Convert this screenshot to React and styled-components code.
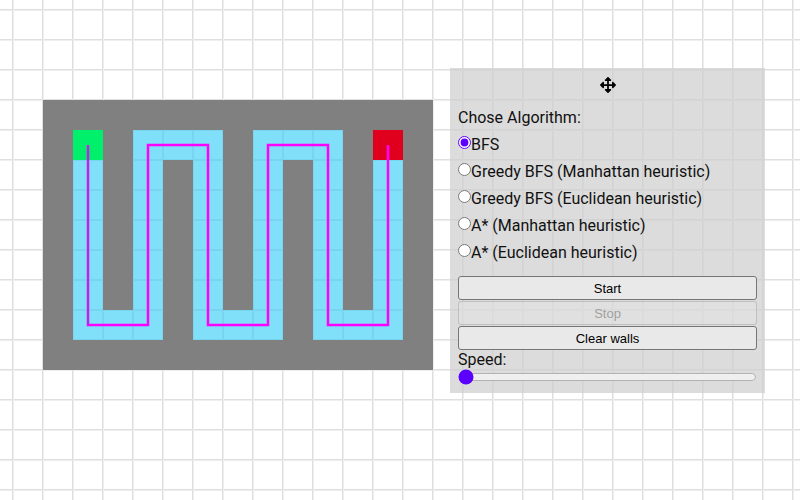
import React, { useState } from "react";
import styled, { createGlobalStyle } from "styled-components";
import { FaArrowsAlt } from "react-icons/fa";

const COLS = 13;
const ROWS = 9;
const CELL = 30;

const GlobalStyle = createGlobalStyle`
  html, body {
    margin: 0;
    padding: 0;
    background-color: #fff;
    background-image:
      linear-gradient(to right, #dfdfdf 1px, #eeeeee 1px, #eeeeee 2px, transparent 2px),
      linear-gradient(to bottom, #dfdfdf 1px, #eeeeee 1px, #eeeeee 2px, transparent 2px);
    background-size: 30px 30px;
    background-position: 12px 9px;
    font-family: Roboto, "Liberation Sans", sans-serif;
    min-height: 500px;
  }
`;

const Page = styled.div`
  display: flex;
  align-items: flex-start;
  gap: 17px;
  padding: 68px 0 0 43px;
`;

const Board = styled.div`
  position: relative;
  margin-top: 32px;
  display: grid;
  grid-template-columns: repeat(${COLS}, ${CELL}px);
  grid-template-rows: repeat(${ROWS}, ${CELL}px);
  background: #808080;
`;

const colors = {
  wall: "#808080",
  visited: "#80dff9",
  start: "#00f06c",
  end: "#e0001e",
};

const Cell = styled.div`
  box-sizing: border-box;
  background: ${(p) => colors[p.$kind]};
  border: ${(p) => (p.$kind === "visited" ? "1px solid rgba(90,170,200,0.2)" : "none")};
`;

const PathLayer = styled.svg`
  position: absolute;
  inset: 0;
  pointer-events: none;
`;

const Panel = styled.div`
  box-sizing: border-box;
  width: 315px;
  height: 325px;
  padding: 6px 8px 8px;
  background: rgba(205, 205, 205, 0.7);
  display: flex;
  flex-direction: column;
`;

const Handle = styled.div`
  display: flex;
  justify-content: center;
  height: 22px;
  align-items: center;
  font-size: 16px;
  color: #000;
`;

const Title = styled.div`
  margin-top: 13px;
  font-size: 16px;
  line-height: 20px;
  color: #111;
`;

const Options = styled.div`
  display: flex;
  flex-direction: column;
  margin-top: 3px;
`;

const Option = styled.label`
  display: flex;
  align-items: center;
  height: 27px;
  font-size: 16px;
  color: #111;

  input {
    margin: 0;
    width: 13px;
    height: 13px;
    accent-color: #5b00ff;
    position: relative;
    top: -2px;
  }
`;

const Buttons = styled.div`
  display: flex;
  flex-direction: column;
  gap: 1px;
  margin-top: 10px;
`;

const Button = styled.button`
  height: 24px;
  width: 100%;
  font-family: "Liberation Sans", Arial, sans-serif;
  font-size: 13px;
  color: #000;
  background: #e9e9e9;
  border: 1px solid #767676;
  border-radius: 3px;
  padding: 0;

  &:disabled {
    color: #a0a0a0;
    background: rgba(230, 230, 230, 0.4);
    border-color: rgba(118, 118, 118, 0.3);
  }
`;

const SpeedLabel = styled.div`
  font-size: 16px;
  line-height: 18px;
  margin-top: 1px;
  color: #111;
`;

const Slider = styled.input`
  width: 100%;
  margin: 0;
  accent-color: #5b00ff;
  height: 16px;
`;

const visited = new Set();
const add = (c, r) => visited.add(`${c},${r}`);
for (let r = 2; r <= 7; r++) { add(1, r); add(11, r); }
[3, 5, 7, 9].forEach((c) => { for (let r = 1; r <= 7; r++) add(c, r); });
[4, 8].forEach((c) => add(c, 1));
[2, 6, 10].forEach((c) => add(c, 7));

const kindOf = (c, r) => {
  if (c === 1 && r === 1) return "start";
  if (c === 11 && r === 1) return "end";
  if (visited.has(`${c},${r}`)) return "visited";
  return "wall";
};

const pathPoints = [
  [1, 1], [1, 7], [3, 7], [3, 1], [5, 1], [5, 7], [7, 7], [7, 1], [9, 1], [9, 7], [11, 7], [11, 1],
]
  .map(([c, r]) => `${c * CELL + 15},${r * CELL + 15}`)
  .join(" ");

const algorithms = [
  "BFS",
  "Greedy BFS (Manhattan heuristic)",
  "Greedy BFS (Euclidean heuristic)",
  "A* (Manhattan heuristic)",
  "A* (Euclidean heuristic)",
];

export default function App() {
  const [algo, setAlgo] = useState("BFS");
  const [speed, setSpeed] = useState(0);

  const cells = [];
  for (let r = 0; r < ROWS; r++) {
    for (let c = 0; c < COLS; c++) {
      cells.push(<Cell key={`${c}-${r}`} $kind={kindOf(c, r)} />);
    }
  }

  return (
    <>
      <GlobalStyle />
      <Page>
        <Board>
          {cells}
          <PathLayer width={COLS * CELL} height={ROWS * CELL}>
            <polyline points={pathPoints} fill="none" stroke="#ff00ff" strokeWidth="2.5" />
            <line x1="45" y1="46" x2="45" y2="225" stroke="#9a3ad6" strokeWidth="1.5" />
          </PathLayer>
        </Board>
        <Panel>
          <Handle>
            <FaArrowsAlt />
          </Handle>
          <Title>Chose Algorithm:</Title>
          <Options>
            {algorithms.map((a) => (
              <Option key={a}>
                <input
                  type="radio"
                  name="algo"
                  checked={algo === a}
                  onChange={() => setAlgo(a)}
                />
                {a}
              </Option>
            ))}
          </Options>
          <Buttons>
            <Button>Start</Button>
            <Button disabled>Stop</Button>
            <Button>Clear walls</Button>
          </Buttons>
          <SpeedLabel>Speed:</SpeedLabel>
          <Slider
            type="range"
            min="0"
            max="100"
            value={speed}
            onChange={(e) => setSpeed(e.target.value)}
          />
        </Panel>
      </Page>
    </>
  );
}
